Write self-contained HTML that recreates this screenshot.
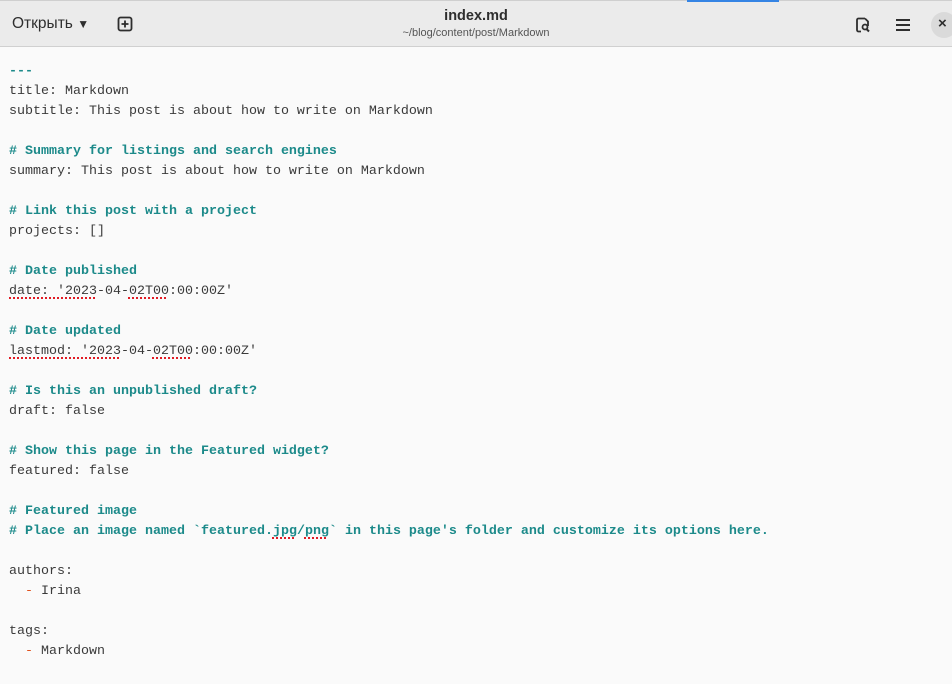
<!DOCTYPE html>
<html><head><meta charset="utf-8"><style>
body{margin:0;width:952px;height:684px;overflow:hidden;background:#fafafa;font-family:"Liberation Sans",sans-serif}
.hdr{position:absolute;left:0;top:0;width:952px;height:47px;background:#ebebeb;border-bottom:1px solid #d0d0d0;border-top:1px solid #cfcfcf;box-sizing:border-box}
.open{position:absolute;left:12px;top:14px;font-size:15.5px;color:#2e2e2e}
.title{position:absolute;left:0;width:952px;text-align:center;top:7px;font-size:14.5px;font-weight:bold;color:#2e2e2e}
.sub{position:absolute;left:0;width:952px;text-align:center;top:26px;font-size:11px;color:#555}
pre{position:absolute;left:9px;top:62px;margin:0;font-family:"Liberation Mono",monospace;font-size:13.33px;line-height:20px;color:#3a3a3a}
.c{color:#1c8a8a;font-weight:bold}
.d{color:#e0531f}
.u{text-decoration:underline dotted #e01b24;text-decoration-thickness:2px;text-underline-offset:3px}
</style></head><body>
<div class="hdr">
<div class="open">Открыть <span style="font-size:12px">&#9660;</span></div>
<svg style="position:absolute;left:117px;top:15px" width="16" height="16"><rect x="1.5" y="1.5" width="13" height="13" rx="2" fill="none" stroke="#2e2e2e" stroke-width="1.8"/><path d="M8 4.5v7M4.5 8h7" stroke="#2e2e2e" stroke-width="1.8"/></svg>
<div class="title">index.md</div>
<div class="sub">~/blog/content/post/Markdown</div>
<svg style="position:absolute;left:855px;top:16px" width="16" height="16"><path d="M10 1.5H3.5a1.5 1.5 0 0 0-1.5 1.5v10a1.5 1.5 0 0 0 1.5 1.5H6M10 1.5l3 3V9" fill="none" stroke="#2e2e2e" stroke-width="1.8"/><circle cx="10" cy="10" r="2.5" fill="none" stroke="#2e2e2e" stroke-width="1.8"/><path d="M11.5 12l2.5 2.5" stroke="#2e2e2e" stroke-width="2"/></svg>
<svg style="position:absolute;left:895px;top:17px" width="16" height="14"><path d="M1 2h14M1 7h14M1 12h14" stroke="#2e2e2e" stroke-width="2"/></svg>
<div style="position:absolute;left:931px;top:11px;width:26px;height:26px;border-radius:13px;background:#dadada"></div>
<div style="position:absolute;left:938px;top:14px;font-size:15px;font-weight:bold;color:#2e2e2e">×</div>
<div style="position:absolute;left:687px;top:-1px;width:92px;height:2px;background:#3584e4"></div>
</div>
<pre><span class="c">---</span>
title: Markdown
subtitle: This post is about how to write on Markdown

<span class="c"># Summary for listings and search engines</span>
summary: This post is about how to write on Markdown

<span class="c"># Link this post with a project</span>
projects: []

<span class="c"># Date published</span>
<span class="u">date: '2023</span>-04-<span class="u">02T00</span>:00:00Z'

<span class="c"># Date updated</span>
<span class="u">lastmod: '2023</span>-04-<span class="u">02T00</span>:00:00Z'

<span class="c"># Is this an unpublished draft?</span>
draft: false

<span class="c"># Show this page in the Featured widget?</span>
featured: false

<span class="c"># Featured image</span>
<span class="c"># Place an image named `featured.<span class="u">jpg</span>/<span class="u">png</span>` in this page's folder and customize its options here.</span>

authors:
  <span class="d">-</span> Irina

tags:
  <span class="d">-</span> Markdown
</pre>
</body></html>
